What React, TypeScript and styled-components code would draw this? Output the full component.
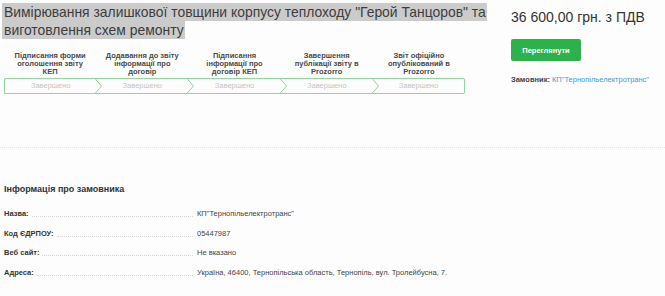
import React from "react";
import styled, { createGlobalStyle } from "styled-components";

const Global = createGlobalStyle`
  html, body { margin: 0; padding: 0; background: #fcfdfc; }
  body { font-family: "Liberation Sans", Arial, sans-serif; color: #333; }
`;

const Page = styled.div`
  width: 665px;
  height: 296px;
  overflow: hidden;
  padding: 3px 0 0 0;
  box-sizing: border-box;
`;

const Top = styled.div`
  display: flex;
  align-items: flex-start;
  padding-left: 4px;
`;

const Left = styled.div`
  width: 500px;
`;

const Title = styled.h1`
  margin: 0;
  font-size: 13.9px;
  font-weight: normal;
  line-height: 18px;
  color: #3d3d3d;
`;

const Highlight = styled.span`
  background: #cbcbcb;
  padding: 1px 1px 1px 2px;
  margin-left: -2px;
  box-decoration-break: clone;
  -webkit-box-decoration-break: clone;
`;

const Steps = styled.div`
  display: flex;
  width: 461px;
  margin-top: 13px;
`;

const Step = styled.div`
  flex: 1;
  display: flex;
  flex-direction: column;
`;

const StepLabel = styled.div`
  height: 24px;
  font-size: 7.5px;
  line-height: 8px;
  font-weight: bold;
  color: #4a4a4a;
  text-align: center;
  padding: 0 7px;
  display: flex;
  align-items: flex-end;
  justify-content: center;
`;

const StepBar = styled.div<{ $first?: boolean; $last?: boolean }>`
  position: relative;
  height: 14px;
  margin-top: 2px;
  border-top: 1px solid #8ed89d;
  border-bottom: 1px solid #8ed89d;
  border-left: ${(p) => (p.$first ? "1px solid #8ed89d" : "none")};
  border-right: ${(p) => (p.$last ? "1px solid #8ed89d" : "none")};
  border-radius: ${(p) => (p.$first ? "2px 0 0 2px" : p.$last ? "0 2px 2px 0" : "0")};
  font-size: 7.5px;
  line-height: 14px;
  color: #c4c4c4;
  text-align: center;
`;

const Chevron = styled.svg`
  position: absolute;
  right: -6px;
  top: -1px;
  width: 8px;
  height: 16px;
  overflow: visible;
`;

const Right = styled.div`
  margin-left: 7px;
  padding-top: 5px;
`;

const Price = styled.div`
  font-size: 14px;
  line-height: 18px;
  color: #333;
`;

const ViewButton = styled.button`
  display: block;
  margin-top: 13px;
  width: 70px;
  height: 22px;
  border: none;
  border-radius: 2px;
  background: #2db24b;
  color: #fff;
  font-family: "Liberation Sans", Arial, sans-serif;
  font-size: 7.5px;
  font-weight: bold;
  padding: 0;
  cursor: pointer;
`;

const Customer = styled.div`
  margin-top: 14px;
  font-size: 7.5px;
  line-height: 10px;
`;

const CustomerLabel = styled.span`
  font-weight: bold;
  color: #444;
`;

const CustomerLink = styled.a`
  color: #3d9bd8;
  text-decoration: none;
`;

const Divider = styled.div`
  margin-top: 53px;
  border-top: 1px dotted #e2e8e8;
`;

const Info = styled.section`
  padding: 0 4px;
`;

const InfoHeading = styled.h2`
  margin: 35px 0 9px;
  font-size: 9px;
  line-height: 12px;
  font-weight: bold;
  color: #333;
`;

const Row = styled.div`
  display: flex;
  align-items: center;
  height: 19.5px;
  font-size: 7.5px;
`;

const RowLabel = styled.div`
  width: 189px;
  display: flex;
  align-items: baseline;
  font-weight: bold;
  color: #333;
  white-space: nowrap;
`;

const Leader = styled.span`
  flex: 1;
  margin-left: 3px;
  border-bottom: 1px dotted #d6dada;
  transform: translateY(1px);
`;

const RowValue = styled.div`
  margin-left: 4px;
  color: #444;
`;

const steps = [
  "Підписання форми оголошення звіту КЕП",
  "Додавання до звіту інформації про договір",
  "Підписання інформації про договір КЕП",
  "Завершення публікації звіту в Prozorro",
  "Звіт офіційно опублікований в Prozorro",
];

const rows = [
  ["Назва:", "КП\"Тернопільелектротранс\""],
  ["Код ЄДРПОУ:", "05447987"],
  ["Веб сайт:", "Не вказано"],
  ["Адреса:", "Україна, 46400, Тернопільська область, Тернопіль, вул. Тролейбусна, 7."],
];

export default function App() {
  return (
    <Page>
      <Global />
      <Top>
        <Left>
          <Title>
            <Highlight>
              Вимірювання залишкової товщини корпусу теплоходу "Герой Танцоров" та виготовлення схем ремонту
            </Highlight>
          </Title>
          <Steps>
            {steps.map((s, i) => (
              <Step key={i}>
                <StepLabel>{s}</StepLabel>
                <StepBar $first={i === 0} $last={i === steps.length - 1}>
                  Завершено
                  {i < steps.length - 1 && (
                    <Chevron viewBox="0 0 8 16">
                      <polyline points="0.5,0 7.5,8 0.5,16" fill="none" stroke="#8ed89d" strokeWidth="1" />
                    </Chevron>
                  )}
                </StepBar>
              </Step>
            ))}
          </Steps>
        </Left>
        <Right>
          <Price>36 600,00 грн. з ПДВ</Price>
          <ViewButton>Переглянути</ViewButton>
          <Customer>
            <CustomerLabel>Замовник:</CustomerLabel>{" "}
            <CustomerLink href="#">КП"Тернопільелектротранс"</CustomerLink>
          </Customer>
        </Right>
      </Top>
      <Divider />
      <Info>
        <InfoHeading>Інформація про замовника</InfoHeading>
        {rows.map(([l, v]) => (
          <Row key={l}>
            <RowLabel>
              {l}
              <Leader />
            </RowLabel>
            <RowValue>{v}</RowValue>
          </Row>
        ))}
      </Info>
    </Page>
  );
}
